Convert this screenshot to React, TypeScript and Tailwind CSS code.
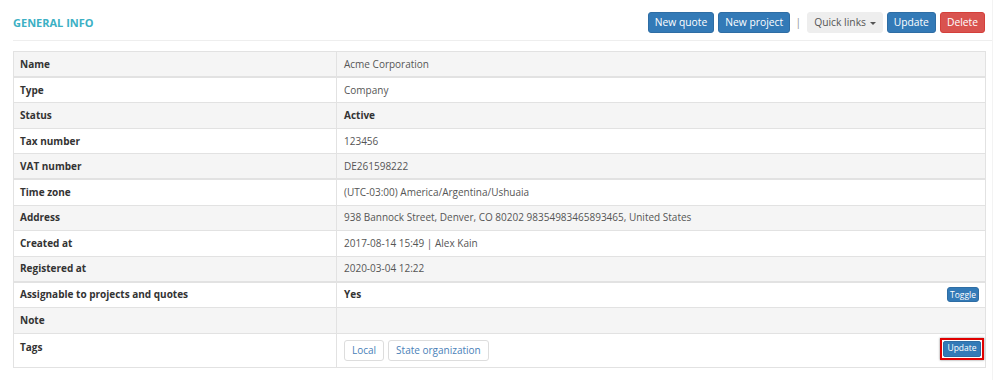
import React from "react";

type Row = {
  label: string;
  value?: React.ReactNode;
  bold?: boolean;
  thickTop?: boolean;
};

const rows: Row[] = [
  { label: "Name", value: "Acme Corporation" },
  { label: "Type", value: "Company", thickTop: true },
  { label: "Status", value: "Active", bold: true },
  { label: "Tax number", value: "123456" },
  { label: "VAT number", value: "DE261598222" },
  { label: "Time zone", value: "(UTC-03:00) America/Argentina/Ushuaia", thickTop: true },
  { label: "Address", value: "938 Bannock Street, Denver, CO 80202 98354983465893465, United States" },
  { label: "Created at", value: "2017-08-14 15:49 | Alex Kain" },
  { label: "Registered at", value: "2020-03-04 12:22" },
];

function HeaderButton({ children, variant = "primary" }: { children: React.ReactNode; variant?: "primary" | "danger" | "default" }) {
  const colors =
    variant === "danger"
      ? "bg-[#d9534f] border-[#d43f3a] text-white"
      : variant === "default"
      ? "bg-[#eeeeee] border-[#eeeeee] text-[#555]"
      : "bg-[#337ab7] border-[#2e6da4] text-white";
  return (
    <button className={`h-[21px] px-[6px] rounded-[3px] border text-[10.3px] leading-none ${colors}`}>
      {children}
    </button>
  );
}

export default function App() {
  return (
    <div className="w-[1000px] h-[380px] bg-white font-['Open_Sans',sans-serif] text-[#333]">
      <div className="ml-[13px] mr-[7px] h-full border-r border-[#f3f3f3]">
        {/* Header */}
        <div className="flex items-center justify-between h-[41px] pt-[4px] pr-[7px] border-b border-[#eeeeee]">
          <h2 className="text-[11px] font-bold text-[#3bb0c4] pt-[2px]">GENERAL INFO</h2>
          <div className="flex items-center gap-[4px]">
            <HeaderButton>New quote</HeaderButton>
            <HeaderButton>New project</HeaderButton>
            <span className="text-[#999] text-[11px] pl-[1px] pr-[2px]">|</span>
            <HeaderButton variant="default">
              Quick links <span className="inline-block align-middle ml-[1px] w-0 h-0 border-l-[3px] border-r-[3px] border-t-[3px] border-l-transparent border-r-transparent border-t-[#555]" />
            </HeaderButton>
            <HeaderButton>Update</HeaderButton>
            <HeaderButton variant="danger">Delete</HeaderButton>
          </div>
        </div>

        {/* Info table */}
        <table className="mt-[10px] w-[973px] border-collapse text-[10px] leading-[15px]">
          <tbody>
            {rows.map((r, i) => (
              <tr
                key={r.label}
                className={`${i % 2 === 0 ? "bg-[#f5f5f5]" : "bg-white"} ${r.thickTop ? "border-t-2" : "border-t"} border-[#e2e2e2]`}
              >
                <td className="w-[323px] h-[25.6px] px-[6px] py-[4px] border-x border-[#e2e2e2] font-bold align-middle">{r.label}</td>
                <td className={`px-[7px] py-[4px] border-r border-[#e2e2e2] align-middle ${r.bold ? "font-bold text-[#333]" : "text-[#555]"}`}>
                  {r.value}
                </td>
              </tr>
            ))}
            <tr className="bg-white border-t-2 border-[#e2e2e2]">
              <td className="h-[25.6px] px-[6px] py-[4px] border-x border-[#e2e2e2] font-bold">Assignable to projects and quotes</td>
              <td className="px-[7px] py-[4px] border-r border-[#e2e2e2]">
                <div className="flex items-center justify-between">
                  <span className="font-bold">Yes</span>
                  <button className="h-[15px] px-[2px] mr-[-1px] rounded-[3px] bg-[#337ab7] border border-[#2e6da4] text-white text-[8.5px] leading-none">
                    Toggle
                  </button>
                </div>
              </td>
            </tr>
            <tr className="bg-[#f5f5f5] border-t border-[#e2e2e2]">
              <td className="h-[25.6px] px-[6px] py-[4px] border-x border-[#e2e2e2] font-bold">Note</td>
              <td className="px-[7px] py-[4px] border-r border-[#e2e2e2]"></td>
            </tr>
            <tr className="bg-white border-y border-[#e2e2e2]">
              <td className="h-[34px] px-[6px] pt-[6px] pb-[4px] border-x border-[#e2e2e2] font-bold align-top">Tags</td>
              <td className="px-[7px] pt-[6px] pb-[5px] border-r border-[#e2e2e2] align-top">
                <div className="flex items-start justify-between">
                  <div className="flex gap-[4px]">
                    <span className="h-[21px] px-[7px] flex items-center rounded-[3px] border border-[#dddddd] text-[#4a7fb8]">Local</span>
                    <span className="h-[21px] px-[7px] flex items-center rounded-[3px] border border-[#dddddd] text-[#4a7fb8]">State organization</span>
                  </div>
                  <span className="mt-[-2px] mr-[-6px] p-[1px] border-2 border-[#e00000] shadow-[0_0_2px_rgba(0,0,0,0.5)]">
                    <button className="block h-[16px] w-[38px] rounded-[2px] bg-[#337ab7] border border-[#2e6da4] text-white text-[8.5px] leading-none">
                      Update
                    </button>
                  </span>
                </div>
              </td>
            </tr>
          </tbody>
        </table>
      </div>
    </div>
  );
}
